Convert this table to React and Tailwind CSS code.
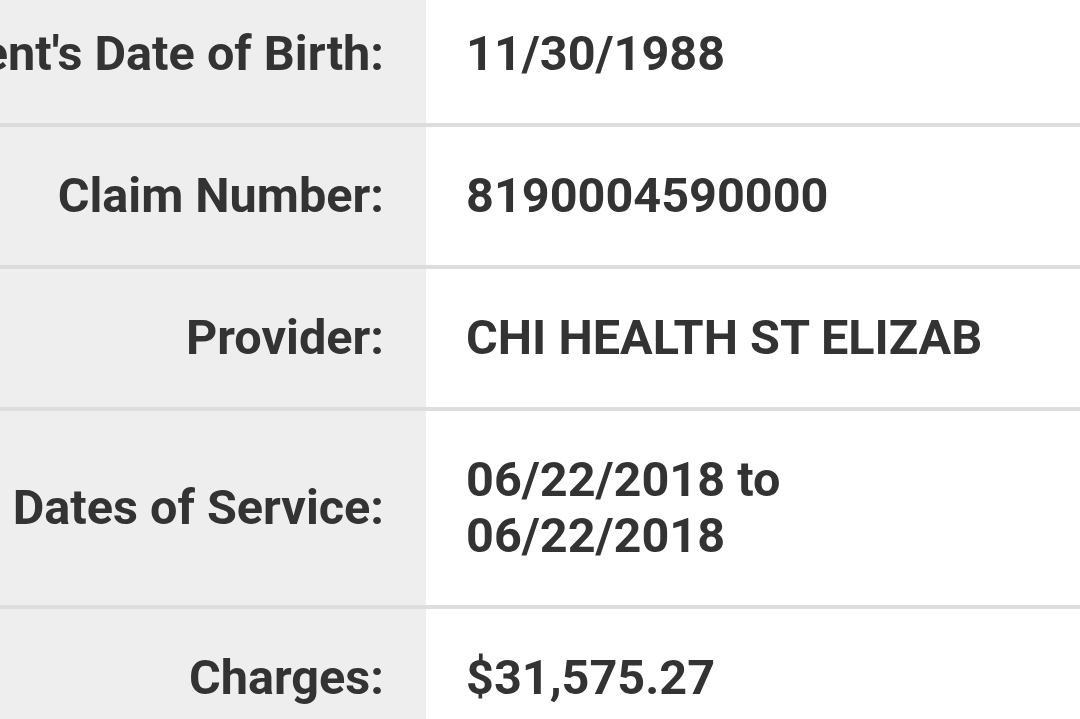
export default function App() {
  const rows = [
    ["Patient's Date of Birth:", ["11/30/1988"]],
    ["Claim Number:", ["8190004590000"]],
    ["Provider:", ["CHI HEALTH ST ELIZAB"]],
    ["Dates of Service:", ["06/22/2018 to", "06/22/2018"]],
    ["Charges:", ["$31,575.27"]],
  ];
  return (
    <div
      className="w-[1080px] h-[719px] overflow-hidden bg-white text-[#333333]"
      style={{ fontFamily: "Roboto, 'Liberation Sans', sans-serif" }}
    >
      <div className="-mt-[15px] flex flex-col">
        {rows.map(([label, vals], i) => (
          <div
            key={i}
            className="flex border-b-4 border-[#dddddd] font-bold text-[48.6px] leading-[56px]"
          >
            <div className="w-[426px] shrink-0 bg-[#eeeeee] flex items-center justify-end pr-[42px] whitespace-nowrap overflow-hidden">
              {label}
            </div>
            <div className="flex-1 py-[41px] pl-[40px] whitespace-nowrap">
              {vals.map((v, j) => (
                <div key={j}>{v}</div>
              ))}
            </div>
          </div>
        ))}
      </div>
    </div>
  );
}
